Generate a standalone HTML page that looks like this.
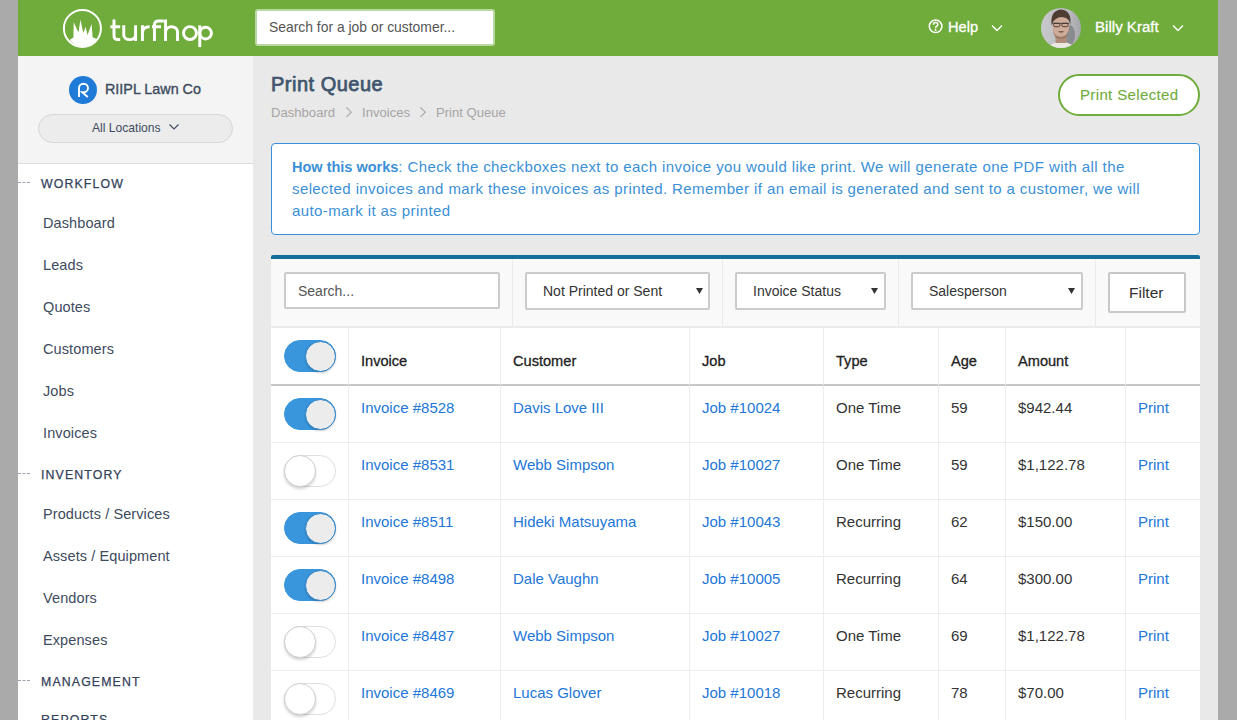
<!DOCTYPE html>
<html><head><meta charset="utf-8">
<style>
*{box-sizing:border-box;margin:0;padding:0}
html,body{width:1237px;height:720px;overflow:hidden;background:#aaaaaa;font-family:"Liberation Sans",sans-serif}
.a{position:absolute;white-space:nowrap}
#hdr{position:absolute;left:18px;top:0;width:1200px;height:56px;background:#6fac3b}
#side{position:absolute;left:18px;top:56px;width:235px;height:664px;background:#fff}
#sidetop{position:absolute;left:0;top:0;width:235px;height:108px;background:#f4f4f4;border-bottom:1px solid #dcdcdc}
#main{position:absolute;left:253px;top:56px;width:965px;height:664px;background:#e9e9e9}
.nav{position:absolute;left:43px;font-size:14.5px;letter-spacing:0.1px;color:#3e4b5e;line-height:17px;margin-top:1px}
.sec{position:absolute;left:41px;font-size:12.3px;font-weight:normal;-webkit-text-stroke:0.25px #33415a;letter-spacing:1.15px;color:#33415a;line-height:14px}
.dash{position:absolute;left:18px;width:12px;border-top:1px dashed #9aa3ae}
#tb td{height:57px;border-left:1px solid #eceeee;border-bottom:1px solid #eceeee;padding:0 0 0 12px;vertical-align:top;padding-top:13px;font-size:15px;line-height:17px;color:#333;white-space:nowrap}
#tb td:first-child{border-left:0;padding:12px 0 0 13px}
#tb tr.hd td{height:58px;border-bottom:2px solid #c8c8c8;font-weight:normal;-webkit-text-stroke:0.3px #222;color:#222;padding-top:25px;font-size:14.6px;letter-spacing:0px}
#tb tr.hd td:first-child{padding-top:12px}
#tb td.lk{color:#2277d8}
.tg{display:block;position:relative;width:52px;height:32px;border-radius:16px;border:1px solid #dfdfdf;background:#fff}
.tg i{position:absolute;left:-1px;top:-1px;width:32px;height:32px;border-radius:50%;background:#fff;border:1px solid #d0d0d0;box-shadow:0 2px 3px rgba(0,0,0,.18)}
.tg.on{background:#3996dc;border-color:#3996dc}
.tg.on i{left:19.5px;top:-0.5px;width:31px;height:31px;background:#ececec;border:1px solid #2f86cc;box-shadow:0 1px 2px rgba(0,0,0,.2)}
</style></head><body>
<div id="hdr"></div>
<!-- logo -->
<svg class="a" style="left:62px;top:8px" width="42" height="42" viewBox="0 0 42 42">
 <circle cx="20.4" cy="20.45" r="18.5" fill="none" stroke="#fff" stroke-width="2"/>
 <path d="M7.6 32.1 L9.8 30.5 L11.4 29.6 L11.7 14.3 L16.5 24.5 L18.4 11.4 L21.3 25.1 L23.6 18.7 L25.5 27 L29.6 15.9 L30.6 29.3 L33.1 30.2 L35 31.8 A18 18 0 0 1 7.6 32.1 Z" fill="#fff"/>
</svg>
<svg class="a" style="left:0;top:0" width="240" height="56" viewBox="0 0 240 56">
 <g fill="none" stroke="#fff" stroke-width="2.95">
  <path d="M114 19.6 V35.5 Q114 39.55 118 39.55 H120.2 M110.4 26.65 H120.2"/>
  <path d="M123.75 25.3 V35 A5.9 4.6 0 0 0 135.55 35 M135.55 25.3 V40.9"/>
  <path d="M142.45 25.3 V40.9 M142.45 32.5 Q142.8 26.65 149.6 26.65"/>
  <path d="M154.45 40.9 V25 Q154.45 20.95 158.5 20.95 H163.8 M152 26.65 H161"/>
  <path d="M165.55 19.6 V40.9 M165.55 32 A6 5.35 0 0 1 177.55 32 V40.9"/>
  <circle cx="190" cy="33.1" r="6.45"/>
  <path d="M199.75 25.3 V47.1"/>
  <circle cx="205.6" cy="33.1" r="5.85"/>
 </g>
</svg>
<!-- search -->
<div class="a" style="left:255px;top:9px;width:240px;height:37px;background:#fff;border:2px solid #b9d7a0;border-radius:3px"></div>
<div class="a" style="left:269px;top:19px;font-size:13.9px;color:#555;line-height:16px">Search for a job or customer...</div>
<!-- help -->
<svg class="a" style="left:928px;top:19px" width="15" height="15" viewBox="0 0 15 15">
 <circle cx="7.6" cy="7.3" r="6.3" fill="none" stroke="#fff" stroke-width="1.5"/>
 <path d="M5.4 5.8 Q5.4 3.6 7.6 3.6 Q9.8 3.6 9.8 5.5 Q9.8 6.6 8.5 7.3 Q7.6 7.8 7.6 9.2" fill="none" stroke="#fff" stroke-width="1.5"/>
 <circle cx="7.6" cy="11" r="0.95" fill="#fff"/>
</svg>
<div class="a" style="left:948px;top:19px;font-size:14.6px;color:#fff;-webkit-text-stroke:0.3px #fff;line-height:17px">Help</div>
<svg class="a" style="left:991px;top:23.5px" width="12" height="8" viewBox="0 0 12 8"><path d="M1 1.5 L6 6.5 L11 1.5" fill="none" stroke="#fff" stroke-width="1.4"/></svg>
<!-- avatar -->
<svg class="a" style="left:1041px;top:8px" width="40" height="40" viewBox="0 0 40 40">
 <defs><clipPath id="cp"><circle cx="20" cy="20" r="20"/></clipPath>
 <linearGradient id="bg" x1="0" y1="0" x2="1" y2="0"><stop offset="0" stop-color="#c6c8cc"/><stop offset="0.7" stop-color="#b9bbbf"/><stop offset="1" stop-color="#a4a6aa"/></linearGradient>
 <filter id="bl" x="-50%" y="-50%" width="200%" height="200%"><feGaussianBlur stdDeviation="0.7"/></filter></defs>
 <g clip-path="url(#cp)">
  <rect width="40" height="40" fill="url(#bg)"/>
  <ellipse cx="29" cy="27" rx="5" ry="10" fill="#77797d" opacity="0.7" filter="url(#bl)"/>
  <path d="M7 41 Q9 35.5 15 34.5 L25 34.5 Q31 35.5 33 41 Z" fill="#ece8e4"/>
  <rect x="14.5" y="27" width="11" height="8" fill="#b08d7b"/>
  <ellipse cx="19.8" cy="18.5" rx="8.4" ry="11.8" fill="#cfac9a"/>
  <path d="M12 22 Q12.5 31 19.8 31 Q27 31 27.6 22 Q26 28.5 19.8 28.8 Q13.5 28.5 12 22Z" fill="#8e6d5e" opacity="0.75"/>
  <path d="M10.6 17.5 Q8.8 2.5 20 1.5 Q31.2 2.5 29.2 17 Q28.6 9.5 21 9 Q13 9 10.6 17.5 Z" fill="#4d3c31"/>
  <g fill="none" stroke="#37302c" stroke-width="0.85">
   <path d="M11.3 15.3 H28.3"/>
   <rect x="12.6" y="15.3" width="6.2" height="3.4" rx="1.3"/>
   <rect x="20.9" y="15.3" width="6.2" height="3.4" rx="1.3"/>
  </g>
  <path d="M16.5 23.8 Q20 22.6 23.5 23.8 Q20 25.2 16.5 23.8Z" fill="#50362f"/>
 </g>
</svg>
<div class="a" style="left:1095px;top:18px;font-size:15.1px;color:#fff;-webkit-text-stroke:0.3px #fff;line-height:17px">Billy Kraft</div>
<svg class="a" style="left:1172px;top:24px" width="12" height="8" viewBox="0 0 12 8"><path d="M1 1.5 L6 6.5 L11 1.5" fill="none" stroke="#fff" stroke-width="1.4"/></svg>

<!-- sidebar -->
<div id="side"><div id="sidetop"></div></div>
<div class="a" style="left:69px;top:76px;width:28px;height:28px;border-radius:50%;background:#1f7bd7"></div>
<svg class="a" style="left:69px;top:76px" width="28" height="28" viewBox="69 76 28 28"><path d="M79 96.9 V88 A4.5 4.3 0 1 1 83.5 92.3 H82.2 L87.8 96.9" fill="none" stroke="#fff" stroke-width="1.9"/></svg>
<div class="a" style="left:105px;top:81px;font-size:14.35px;color:#3e4b5e;-webkit-text-stroke:0.35px #3e4b5e;line-height:17px">RIIPL Lawn Co</div>
<div class="a" style="left:38px;top:114px;width:195px;height:29px;border-radius:15px;background:#ececec;border:1px solid #d6d6d6"></div>
<div class="a" style="left:92px;top:121px;font-size:12.1px;color:#3e4b5e;line-height:14px">All Locations</div>
<svg class="a" style="left:168px;top:123px" width="12" height="8" viewBox="0 0 12 8"><path d="M1.5 1.5 L6 6 L10.5 1.5" fill="none" stroke="#3e4b5e" stroke-width="1.1"/></svg>

<div class="dash" style="top:182px"></div><div class="sec" style="top:177px">WORKFLOW</div>
<div class="nav" style="top:214px">Dashboard</div>
<div class="nav" style="top:256px">Leads</div>
<div class="nav" style="top:298px">Quotes</div>
<div class="nav" style="top:340px">Customers</div>
<div class="nav" style="top:382px">Jobs</div>
<div class="nav" style="top:424px">Invoices</div>
<div class="dash" style="top:473px"></div><div class="sec" style="top:468px">INVENTORY</div>
<div class="nav" style="top:505px">Products / Services</div>
<div class="nav" style="top:547px">Assets / Equipment</div>
<div class="nav" style="top:589px">Vendors</div>
<div class="nav" style="top:631px">Expenses</div>
<div class="dash" style="top:680px"></div><div class="sec" style="top:675px">MANAGEMENT</div>
<div class="dash" style="top:720px"></div><div class="sec" style="top:713px">REPORTS</div>

<!-- main -->
<div id="main"></div>
<div class="a" style="left:271px;top:73px;font-size:20px;font-weight:normal;-webkit-text-stroke:0.75px #41566e;letter-spacing:0.5px;color:#41566e;line-height:23px">Print Queue</div>
<div class="a" style="left:271px;top:105px;font-size:13.1px;color:#a5a5a5;line-height:15px">Dashboard</div>
<svg class="a" style="left:345px;top:106px" width="8" height="12" viewBox="0 0 8 12"><path d="M1.5 1.5 L6.3 6.2 L1.5 10.9" fill="none" stroke="#a8a8a8" stroke-width="1.1"/></svg>
<div class="a" style="left:362px;top:105px;font-size:13.1px;color:#a5a5a5;line-height:15px">Invoices</div>
<svg class="a" style="left:419px;top:106px" width="8" height="12" viewBox="0 0 8 12"><path d="M1.5 1.5 L6.3 6.2 L1.5 10.9" fill="none" stroke="#a8a8a8" stroke-width="1.1"/></svg>
<div class="a" style="left:436px;top:105px;font-size:13.1px;color:#a5a5a5;line-height:15px">Print Queue</div>
<div class="a" style="left:1058px;top:74px;width:142px;height:42px;border:2px solid #6fac3b;border-radius:21px;background:#fff"></div>
<div class="a" style="left:1080px;top:86px;font-size:15px;letter-spacing:0.36px;color:#6fac3b;-webkit-text-stroke:0.1px #6fac3b;line-height:18px">Print Selected</div>

<!-- info -->
<div class="a" style="left:271px;top:143px;width:929px;height:92px;border:1px solid #3890db;border-radius:4px;background:#fff"></div>
<div class="a" style="left:292px;top:156px;font-size:15px;letter-spacing:0.4px;color:#3b90d6;line-height:22px"><b style="font-size:14.5px;letter-spacing:0">How this works</b>: Check the checkboxes next to each invoice you would like print. We will generate one PDF with all the<br>selected invoices and mark these invoices as printed. Remember if an email is generated and sent to a customer, we will<br>auto-mark it as printed</div>

<!-- panel -->
<div class="a" style="left:271px;top:255px;width:929px;height:465px;background:#fff;border-top:4px solid #136f9a;border-radius:2px 2px 0 0"></div>
<div class="a" style="left:271px;top:259px;width:929px;height:69px;background:#f9f9f9;border-bottom:2px solid #eaebed"></div>
<div class="a" style="left:512px;top:259px;width:1px;height:67px;background:#ebebeb"></div>
<div class="a" style="left:722px;top:259px;width:1px;height:67px;background:#ebebeb"></div>
<div class="a" style="left:898px;top:259px;width:1px;height:67px;background:#ebebeb"></div>
<div class="a" style="left:1095px;top:259px;width:1px;height:67px;background:#ebebeb"></div>
<div class="a" style="left:284px;top:272px;width:216px;height:37px;border:2px solid #cbcbcb;border-radius:2px;background:#fff"></div>
<div class="a" style="left:298px;top:283px;font-size:14px;color:#555;line-height:16px">Search...</div>
<div class="a" style="left:525px;top:272px;width:185px;height:38px;border:2px solid #cbcbcb;border-radius:2px;background:#fff"></div>
<div class="a" style="left:543px;top:283px;font-size:14px;color:#333;line-height:16px">Not Printed or Sent</div>
<div class="a" style="left:735px;top:272px;width:151px;height:38px;border:2px solid #cbcbcb;border-radius:2px;background:#fff"></div>
<div class="a" style="left:753px;top:283px;font-size:14px;color:#333;line-height:16px">Invoice Status</div>
<div class="a" style="left:911px;top:272px;width:172px;height:38px;border:2px solid #cbcbcb;border-radius:2px;background:#fff"></div>
<div class="a" style="left:929px;top:283px;font-size:14px;color:#333;line-height:16px">Salesperson</div>
<svg class="a" style="left:696px;top:288px" width="7" height="6" viewBox="0 0 7 6"><path d="M0 0 H7 L3.5 6 Z" fill="#333"/></svg>
<svg class="a" style="left:871px;top:288px" width="7" height="6" viewBox="0 0 7 6"><path d="M0 0 H7 L3.5 6 Z" fill="#333"/></svg>
<svg class="a" style="left:1068px;top:288px" width="7" height="6" viewBox="0 0 7 6"><path d="M0 0 H7 L3.5 6 Z" fill="#333"/></svg>
<div class="a" style="left:1108px;top:272px;width:78px;height:41px;border:2px solid #c8c8c8;border-radius:2px;background:#fff"></div>
<div class="a" style="left:1129px;top:284px;font-size:15.5px;color:#333;line-height:18px">Filter</div>

<!-- table -->
<table id="tb" style="position:absolute;left:271px;top:328px;width:929px;border-collapse:separate;border-spacing:0;table-layout:fixed">
<colgroup><col style="width:77px"><col style="width:152px"><col style="width:189px"><col style="width:134px"><col style="width:115px"><col style="width:67px"><col style="width:120px"><col style="width:75px"></colgroup>
<tbody>
<tr class="hd"><td><span class="tg on"><i></i></span></td><td>Invoice</td><td>Customer</td><td>Job</td><td>Type</td><td>Age</td><td>Amount</td><td></td></tr>
<tr><td><span class="tg on"><i></i></span></td><td class="lk">Invoice #8528</td><td class="lk">Davis Love III</td><td class="lk">Job #10024</td><td>One Time</td><td>59</td><td>$942.44</td><td class="lk">Print</td></tr>
<tr><td><span class="tg"><i></i></span></td><td class="lk">Invoice #8531</td><td class="lk">Webb Simpson</td><td class="lk">Job #10027</td><td>One Time</td><td>59</td><td>$1,122.78</td><td class="lk">Print</td></tr>
<tr><td><span class="tg on"><i></i></span></td><td class="lk">Invoice #8511</td><td class="lk">Hideki Matsuyama</td><td class="lk">Job #10043</td><td>Recurring</td><td>62</td><td>$150.00</td><td class="lk">Print</td></tr>
<tr><td><span class="tg on"><i></i></span></td><td class="lk">Invoice #8498</td><td class="lk">Dale Vaughn</td><td class="lk">Job #10005</td><td>Recurring</td><td>64</td><td>$300.00</td><td class="lk">Print</td></tr>
<tr><td><span class="tg"><i></i></span></td><td class="lk">Invoice #8487</td><td class="lk">Webb Simpson</td><td class="lk">Job #10027</td><td>One Time</td><td>69</td><td>$1,122.78</td><td class="lk">Print</td></tr>
<tr><td><span class="tg"><i></i></span></td><td class="lk">Invoice #8469</td><td class="lk">Lucas Glover</td><td class="lk">Job #10018</td><td>Recurring</td><td>78</td><td>$70.00</td><td class="lk">Print</td></tr>
</tbody>
</table>
</body></html>
